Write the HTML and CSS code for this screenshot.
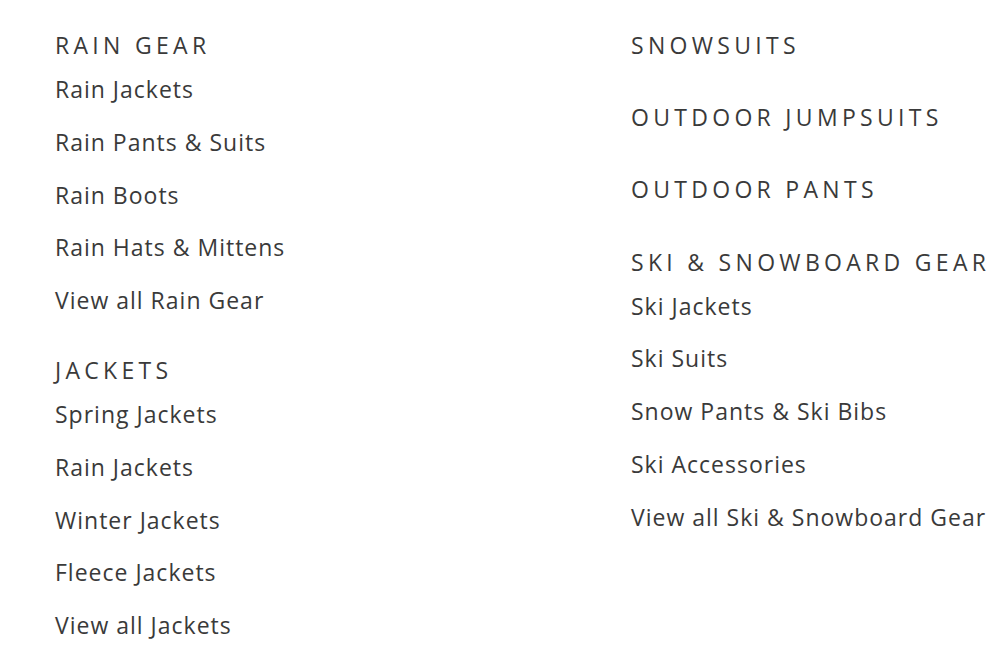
FILE: index.html
```html
<!DOCTYPE html>
<html lang="en">
<head>
  <meta charset="UTF-8" />
  <meta name="viewport" content="width=device-width, initial-scale=1.0"/>
  <title>Outerwear</title>
  <link rel="stylesheet" href="styles.css">
</head>
<body>
  <nav class="menu">
    <div class="menu-col">
      <div class="group">
        <h3 class="group-title">Rain Gear</h3>
        <ul class="links">
          <li><a href="#">Rain Jackets</a></li>
          <li><a href="#">Rain Pants &amp; Suits</a></li>
          <li><a href="#">Rain Boots</a></li>
          <li><a href="#">Rain Hats &amp; Mittens</a></li>
          <li><a href="#">View all Rain Gear</a></li>
        </ul>
      </div>
      <div class="group">
        <h3 class="group-title">Jackets</h3>
        <ul class="links">
          <li><a href="#">Spring Jackets</a></li>
          <li><a href="#">Rain Jackets</a></li>
          <li><a href="#">Winter Jackets</a></li>
          <li><a href="#">Fleece Jackets</a></li>
          <li><a href="#">View all Jackets</a></li>
        </ul>
      </div>
    </div>

    <div class="menu-col">
      <div class="group group-single"><h3 class="group-title">Snowsuits</h3></div>
      <div class="group group-single"><h3 class="group-title">Outdoor Jumpsuits</h3></div>
      <div class="group group-single"><h3 class="group-title">Outdoor Pants</h3></div>
      <div class="group">
        <h3 class="group-title">Ski &amp; Snowboard Gear</h3>
        <ul class="links">
          <li><a href="#">Ski Jackets</a></li>
          <li><a href="#">Ski Suits</a></li>
          <li><a href="#">Snow Pants &amp; Ski Bibs</a></li>
          <li><a href="#">Ski Accessories</a></li>
          <li><a href="#">View all Ski &amp; Snowboard Gear</a></li>
        </ul>
      </div>
    </div>
  </nav>
</body>
</html>
```

FILE: styles.css
```css
* {
  box-sizing: border-box;
  margin: 0;
  padding: 0;
}

body {
  font-family: 'Open Sans', 'Noto Sans', sans-serif;
  background: #fff;
  color: #3a3a3a;
}

.menu {
  display: grid;
  grid-template-columns: 576px auto;
  padding: 33px 0 0 55px;
}

.group {
  margin-bottom: 31px;
}

.group-single {
  margin-bottom: 48.2px;
}

.group-title {
  font-size: 23px;
  font-weight: 400;
  line-height: 24px;
  letter-spacing: 4.3px;
  text-transform: uppercase;
  margin-bottom: 6px;
  white-space: nowrap;
}

.links {
  list-style: none;
}

.links li {
  line-height: 52.8px;
  height: 52.8px;
}

.links a {
  font-size: 23px;
  letter-spacing: 1px;
  color: #3a3a3a;
  text-decoration: none;
  white-space: nowrap;
}
```
